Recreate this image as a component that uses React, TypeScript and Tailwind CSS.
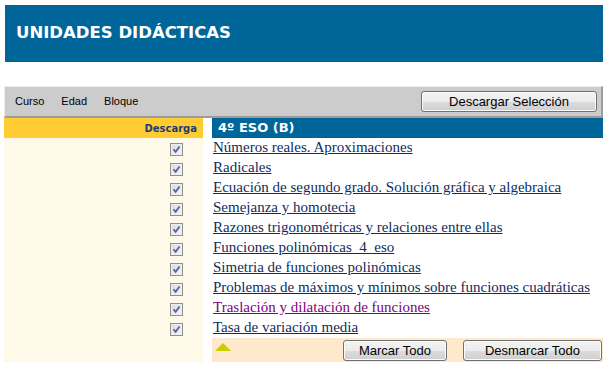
const topics = [
  { title: "Números reales. Aproximaciones" },
  { title: "Radicales" },
  { title: "Ecuación de segundo grado. Solución gráfica y algebraica" },
  { title: "Semejanza y homotecia" },
  { title: "Razones trigonométricas y relaciones entre ellas" },
  { title: "Funciones polinómicas\u00a0 4\u00a0 eso" },
  { title: "Simetria de funciones polinómicas" },
  { title: "Problemas de máximos y mínimos sobre funciones cuadráticas" },
  { title: "Traslación y dilatación de funciones", visited: true },
  { title: "Tasa de variación media" },
];

function CheckBox() {
  return (
    <span className="flex h-[13px] w-[13px] items-center justify-center border border-[#8f8f8f] bg-[linear-gradient(135deg,#d8d8d8,#f8f8f8)] shadow-[inset_0_0_0_1px_#efefef]">
      <svg width="9" height="9" viewBox="0 0 9 9">
        <path d="M1.5 4.2 L3.6 6.8 L7.6 1.4" stroke="#4b5fa6" strokeWidth="1.7" fill="none" />
      </svg>
    </span>
  );
}

const btn =
  "h-[21px] rounded-[3px] border border-[#707070] bg-[linear-gradient(#f3f3f3_0%,#ebebeb_50%,#dddddd_50%,#cfcfcf_100%)] shadow-[inset_0_0_0_1px_#fbfbfb] font-['Liberation_Sans',Arial,sans-serif] text-[13px] leading-none text-black";

export default function App() {
  return (
    <div className="h-[367px] w-[607px] overflow-hidden bg-white pl-[4px] pt-[5px]">
      <div className="w-[599px]">
        <div className="ml-[1px] flex h-[57px] items-center bg-[#006699] pl-[11px]">
          <h1 className="font-['DejaVu_Sans',Verdana,sans-serif] text-[16.5px] font-bold text-white">
            UNIDADES DIDÁCTICAS
          </h1>
        </div>

        <div className="mt-[24px] flex h-[32px] items-center justify-between border-l border-t border-[#ececec] border-b-2 border-r-2 border-b-[#9c9c9c] border-r-[#9c9c9c] bg-[#cccccc] pl-[10px] pr-[4px]">
          <div className="flex gap-[17px] font-['Liberation_Sans',Arial,sans-serif] text-[11px] text-black">
            <span>Curso</span>
            <span>Edad</span>
            <span>Bloque</span>
          </div>
          <button className={`${btn} w-[176px]`}>Descargar Selección</button>
        </div>

        <div className="flex gap-[9px]">
          <div className="h-[244px] w-[199px] bg-[#fff9ea]">
            <div className="flex h-[20px] items-center justify-end bg-[#ffcc33] pr-[6px] font-['DejaVu_Sans',Verdana,sans-serif] text-[10px] font-bold text-[#1f3b73]">
              Descarga
            </div>
            {topics.map((t) => (
              <div key={t.title} className="flex h-[20px] items-center justify-end pr-[20px] pt-[2px]">
                <CheckBox />
              </div>
            ))}
          </div>

          <div className="flex flex-1 flex-col">
            <div className="flex h-[20px] items-center bg-[#006699] pl-[6px] font-['DejaVu_Sans',Verdana,sans-serif] text-[13px] font-bold text-white">
              4º ESO (B)
            </div>
            {topics.map((t) => (
              <div key={t.title} className="h-[20px] whitespace-nowrap pl-[1px] font-['Liberation_Serif','Times_New_Roman',serif] text-[15px] leading-[19px]">
                <a href="#" className={t.visited ? "text-[#800080] underline" : "text-[#102c5e] underline"}>
                  {t.title}
                </a>
              </div>
            ))}
            <div className="flex h-[24px] items-start bg-[#ffe9cc] pr-[1px] pt-[2px]">
              <svg width="16" height="8" viewBox="0 0 16 8" className="ml-[3px] mt-[3px]">
                <polygon points="8,0 16,8 0,8" fill="#cccc00" />
              </svg>
              <button className={`${btn} ml-auto w-[104px]`}>Marcar Todo</button>
              <button className={`${btn} ml-[16px] w-[139px]`}>Desmarcar Todo</button>
            </div>
          </div>
        </div>
      </div>
    </div>
  );
}
